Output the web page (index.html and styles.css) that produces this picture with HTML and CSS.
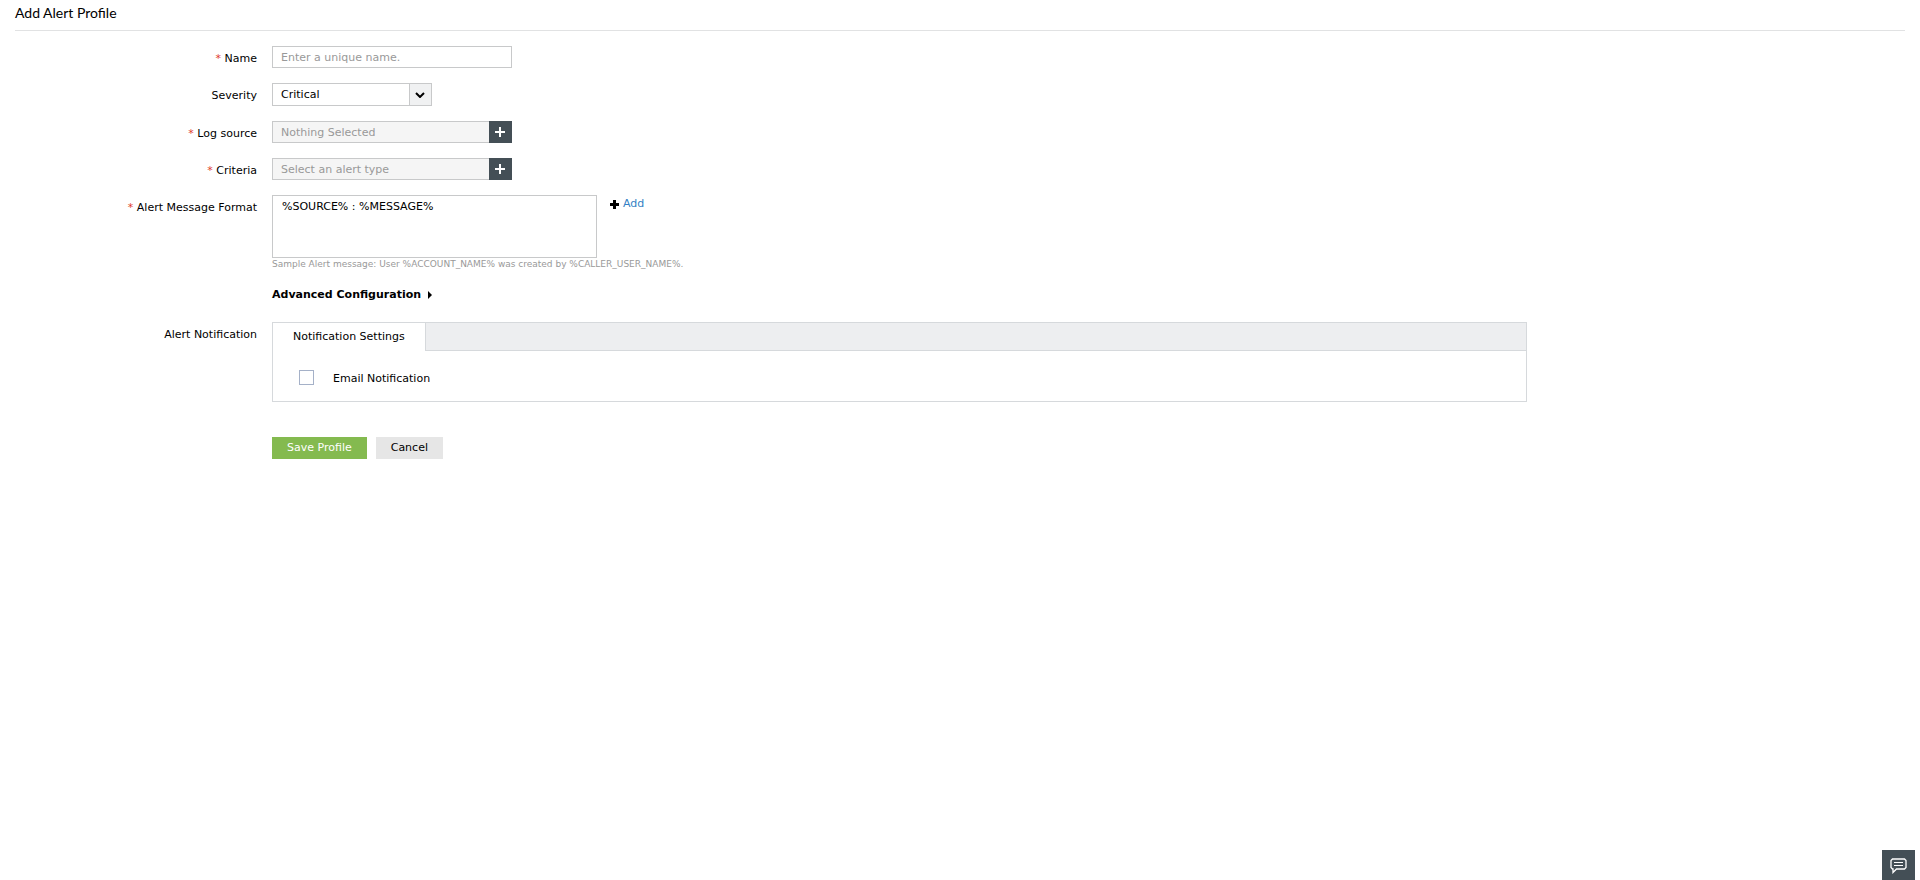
FILE: index.html
```
<!DOCTYPE html>
<html lang="en">
<head>
<meta charset="utf-8">
<title>Add Alert Profile</title>
<link rel="stylesheet" href="styles.css">
</head>

<body>

<h1 class="page-title">Add Alert Profile</h1>

<form class="profile-form">
	<div class="row">
		<label class="row-label" for="name"><span class="required">*</span> Name</label>
		<div class="field">
			<input class="text-box" type="text" id="name" placeholder="Enter a unique name.">
		</div>
	</div>

	<div class="row">
		<label class="row-label" for="severity">Severity</label>
		<div class="field">
			<div class="select-box">
				<select id="severity">
					<option>Critical</option>
					<option>Trouble</option>
					<option>Attention</option>
				</select>
				<span class="select-arrow">
					<svg width="10" height="6" viewBox="0 0 10 6"><path d="M1 1l4 4 4-4" fill="none" stroke="#000" stroke-width="2"/></svg>
				</span>
			</div>
		</div>
	</div>

	<div class="row">
		<label class="row-label" for="log-source"><span class="required">*</span> Log source</label>
		<div class="field picker">
			<input class="text-box" type="text" id="log-source" placeholder="Nothing Selected" readonly>
			<button class="pick-button" type="button" aria-label="Select log source">
				<svg width="10" height="10" viewBox="0 0 10 10"><path d="M5 0v10M0 5h10" stroke="#fff" stroke-width="2"/></svg>
			</button>
		</div>
	</div>

	<div class="row">
		<label class="row-label" for="criteria"><span class="required">*</span> Criteria</label>
		<div class="field picker">
			<input class="text-box" type="text" id="criteria" placeholder="Select an alert type" readonly>
			<button class="pick-button" type="button" aria-label="Select alert type">
				<svg width="10" height="10" viewBox="0 0 10 10"><path d="M5 0v10M0 5h10" stroke="#fff" stroke-width="2"/></svg>
			</button>
		</div>
	</div>

	<div class="row">
		<label class="row-label" for="message"><span class="required">*</span> Alert Message Format</label>
		<div class="field">
			<div class="message">
				<textarea id="message">%SOURCE% : %MESSAGE%</textarea>
				<a class="add-link" href="#">
					<svg width="9" height="9" viewBox="0 0 9 9"><path d="M3 0h3v3h3v3H6v3H3V6H0V3h3z"/></svg>
					Add
				</a>
			</div>
			<p class="hint">Sample Alert message: User %ACCOUNT_NAME% was created by %CALLER_USER_NAME%.</p>
			<button class="advanced" type="button">
				Advanced Configuration
				<svg width="4" height="8" viewBox="0 0 4 8"><path d="M0 0l4 4-4 4z"/></svg>
			</button>
		</div>
	</div>

	<div class="row notification">
		<span class="row-label">Alert Notification</span>
		<div class="panel">
			<div class="tabs">
				<button class="tab" type="button">Notification Settings</button>
			</div>
			<div class="panel-body">
				<input type="checkbox" id="email">
				<label for="email">Email Notification</label>
			</div>
		</div>
	</div>

	<div class="actions">
		<button class="save" type="submit">Save Profile</button>
		<button class="cancel" type="button">Cancel</button>
	</div>
</form>

<button class="chat" type="button" aria-label="Feedback">
	<svg width="17" height="16" viewBox="0 0 17 16" fill="none" stroke="#fff">
		<path d="M2.500 1h12l1.500 1.500v7L14.500 11H6.500L3 14.500V11h-.5L1 9.500v-7z" stroke-width="1.300"/>
		<path d="M4 4.500h9M4 7.500h9"/>
	</svg>
</button>

</body>
</html>
```

FILE: styles.css
```
* {
	box-sizing: border-box;
}

body {
	background-color: #fff;
	color: #000;
	font-family: Verdana, "DejaVu Sans", sans-serif;
	font-size: 11px;
	line-height: 14px;
	margin: 0;
	padding: 0 15px;
}

button, input, select, textarea {
	border: 0;
	border-radius: 0;
	color: inherit;
	font: inherit;
	margin: 0;
	padding: 0;
}

button {
	cursor: pointer;
}

svg {
	display: block;
}

.page-title {
	border-bottom: 1px solid #e1e2e3;
	font-family: Lato, sans-serif;
	font-size: 14px;
	font-weight: normal;
	line-height: 18px;
	margin: 0 0 15px;
	padding: 4px 0 8px;
}

.profile-form {
	display: flex;
	flex-direction: column;
	gap: 15px;
}

.row {
	display: grid;
	gap: 15px;
	grid-template-columns: 242px 1fr;
}

.row-label {
	padding-top: 6px;
	text-align: right;
}

.required {
	color: #e0392b;
}

.text-box {
	border: 1px solid #c8c9ca;
	display: block;
	height: 22px;
	padding: 0 8px;
	width: 240px;
}

::placeholder {
	color: #999;
	opacity: 1;
}

.select-box {
	position: relative;
	width: 160px;
}

.select-box select {
	appearance: none;
	background-color: #fff;
	border: 1px solid #c8c9ca;
	display: block;
	height: 23px;
	padding: 1px 30px 0 8px;
	width: 100%;
}

.select-arrow {
	align-items: center;
	background-color: #f0f1f2;
	border-left: 1px solid #c8c9ca;
	bottom: 1px;
	display: flex;
	justify-content: center;
	padding-right: 1px;
	pointer-events: none;
	position: absolute;
	right: 1px;
	top: 1px;
	width: 22px;
}

.picker {
	display: flex;
	width: 240px;
}

.picker .text-box {
	background-color: #f5f5f5;
	border-right: 0;
	flex: 1;
	min-width: 0;
}

.pick-button {
	align-items: center;
	background-color: #444f56;
	display: flex;
	height: 22px;
	justify-content: center;
	padding-right: 1px;
	width: 23px;
}

.message {
	display: flex;
	gap: 13px;
}

.message textarea {
	border: 1px solid #c8c9ca;
	display: block;
	height: 63px;
	padding: 4px 9px;
	resize: none;
	width: 325px;
}

.add-link {
	align-items: center;
	align-self: flex-start;
	color: #337fc4;
	display: flex;
	gap: 4px;
	padding-top: 2px;
	text-decoration: none;
}

.add-link svg {
	fill: #000;
}

.hint {
	color: #999;
	font-size: 9px;
	line-height: 12px;
	margin: 0 0 18px;
}

.advanced {
	align-items: center;
	background: none;
	display: flex;
	font-weight: bold;
	gap: 7px;
}

.notification {
	margin-top: 5px;
	padding-right: 20%;
}

.panel {
	border: 1px solid #d6d9dc;
}

.tabs {
	background-color: #edeef0;
	border-bottom: 1px solid #d6d9dc;
	display: flex;
	height: 28px;
}

.tab {
	background-color: #fff;
	border-right: 1px solid #d6d9dc;
	height: 28px;
	padding: 0 20px;
}

.panel-body {
	align-items: center;
	display: flex;
	gap: 19px;
	height: 50px;
	padding: 3px 26px 0;
}

.panel-body label {
	padding-top: 2px;
}

.panel-body input {
	appearance: none;
	background-color: #fff;
	border: 1px solid #a5b1c8;
	height: 15px;
	width: 15px;
}

.panel-body input:checked {
	background-color: #a5b1c8;
}

.actions {
	display: flex;
	gap: 9px;
	margin-top: 20px;
	padding-left: 257px;
}

.save, .cancel {
	height: 22px;
	padding: 0 15px;
}

.save {
	background-color: #84ba4f;
	color: #fff;
}

.cancel {
	background-color: #e6e6e6;
}

.chat {
	align-items: center;
	background-color: #444f56;
	bottom: 0;
	display: flex;
	height: 30px;
	justify-content: center;
	padding-top: 2px;
	position: fixed;
	right: 5px;
	width: 33px;
}
```
